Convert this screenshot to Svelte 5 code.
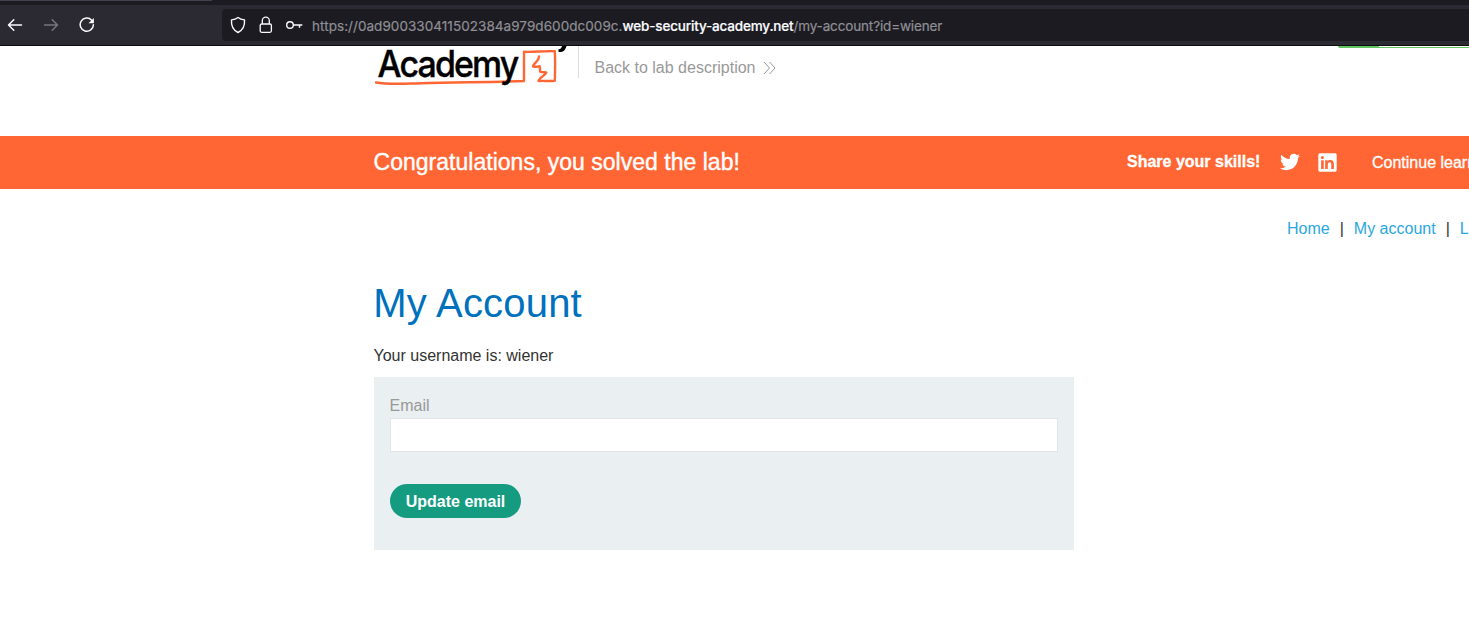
<script>
  let email = $state('');
  const links = ['Home', 'My account', 'Log out'];
</script>

<div class="window">
  <header class="chrome">
    <div class="tabs"><div class="tab-edge"></div></div>
    <div class="toolbar">
      <div class="nav">
        <svg width="16" height="16" viewBox="0 0 16 16" fill="none" stroke="#fbfbfe" stroke-width="1.5" stroke-linecap="round" stroke-linejoin="round"><path d="M14.5 8H1.5M6.8 2.7L1.500 8l5.300 5.300" /></svg>
        <svg width="16" height="16" viewBox="0 0 16 16" fill="none" stroke="#77767d" stroke-width="1.5" stroke-linecap="round" stroke-linejoin="round"><path d="M1.500 8h13M9.200 2.700L14.500 8l-5.300 5.300" /></svg>
        <svg width="16" height="16" viewBox="0 0 16 16" fill="none" stroke="#fbfbfe" stroke-width="1.5" stroke-linecap="round"><path d="M12.700 3.200A6.600 6.600 0 1 0 14.400 7.700" /><path d="M14.900 1v5.200H9.500z" fill="#fbfbfe" stroke="none" /></svg>
      </div>
      <div class="urlbar">
        <svg width="16" height="18" viewBox="0 0 16 18" fill="none" stroke="#fbfbfe" stroke-width="1.4" stroke-linejoin="round"><path d="M8 1.500C6 3 3.800 3.600 1.500 3.900c-.5 6 1.700 10.300 6.500 12.600 4.800-2.300 7-6.600 6.500-12.600C12.200 3.600 10 3 8 1.500z" /></svg>
        <svg width="14" height="18" viewBox="0 0 14 18" fill="none" stroke="#fbfbfe" stroke-width="1.300"><rect x="1.200" y="8" width="11.200" height="8.300" rx="1.500" /><path d="M3.300 8V4.700a3.500 3.500 0 0 1 7 0V8" /></svg>
        <svg width="18" height="18" viewBox="0 0 18 18" fill="none" stroke="#fbfbfe" stroke-width="1.400"><circle cx="5" cy="9" r="3.300" /><path d="M8.300 9h9M14.500 9v2.800" /></svg>
        <span class="url"><span class="sub">https://0ad900330411502384a979d600dc009c.</span><b>web-security-academy.net</b><span class="path">/my-account?id=wiener</span></span>
      </div>
    </div>
  </header>

  <main>
    <div class="lab-header">
      <svg class="logo" width="195" height="44" viewBox="0 0 195 44">
        <path d="M1 36.500C14 38.800 26 37.800 46 37.200c36-1.200 68-.7 103-2.200L149 5.800c10 .6 20-1 30.800-.6.6 10 .4 19 0 29.500-5.600.6-10.200 0-16.300.3.700-3 6.300-5.500 7.800-8.500l-6-.6-.7-5.800c-2.600 1.100-4.800.8-6.600.2 1.400-4.200 6.100-5.100 6-9.800" fill="none" stroke="#f63" stroke-width="2.400" stroke-linejoin="round" stroke-linecap="round" />
        <text x="2.500" y="31" textLength="140" lengthAdjust="spacingAndGlyphs">Academy</text>
        <path d="M187 0h4.600l-1.200 2.800c-1 2.400-2.500 3.500-6.900 3.100V3.200c2.400.1 2.900-1.600 3.500-3.200z" fill="#000" />
      </svg>
      <div class="divider"></div>
      <div class="back">Back to lab description
        <svg width="13" height="14" viewBox="0 0 13 14" fill="none" stroke="#999" stroke-width="1"><path d="M1 1l5.500 6L1 13M6.500 1l5.500 6-5.500 6" /></svg>
      </div>
      <div class="status"></div>
    </div>

    <section class="banner">
      <h4>Congratulations, you solved the lab!</h4>
      <strong>Share your skills!</strong>
      <svg class="twitter" width="20" height="20" viewBox="0 0 24 24" fill="#fff"><path d="M23.950 4.570a10 10 0 0 1-2.820.77 4.960 4.960 0 0 0 2.160-2.720c-.950.550-2 .960-3.130 1.180a4.920 4.920 0 0 0-8.380 4.480C7.690 8.090 4.070 6.130 1.640 3.160a4.820 4.820 0 0 0-.67 2.480c0 1.710.87 3.210 2.190 4.100a4.900 4.900 0 0 1-2.230-.620v.06a4.920 4.920 0 0 0 3.950 4.830 5 5 0 0 1-2.210.080 4.940 4.940 0 0 0 4.600 3.420A9.870 9.870 0 0 1 0 19.540a13.990 13.990 0 0 0 7.550 2.210c9.050 0 13.990-7.500 13.990-13.980 0-.210 0-.420-.020-.630a9.940 9.940 0 0 0 2.430-2.570z" /></svg>
      <svg class="linkedin" width="19" height="19" viewBox="0 0 19 19"><rect x=".3" y=".3" width="18.400" height="18.400" rx="1.600" fill="#fff" /><g fill="#f63"><circle cx="4.400" cy="4.500" r="1.500" /><path d="M3.100 7.200h2.600V16H3.100zM7.200 7.200h2.500v1.200c.5-.9 1.400-1.400 2.700-1.400 2.700 0 3.500 1.700 3.500 4.200V16h-2.600v-4.300c0-1.300-.3-2.400-1.600-2.400-1.400 0-1.900 1-1.900 2.400V16H7.200z" /></g></svg>
      <span class="continue">Continue learning</span>
    </section>

    <nav class="links">
      {#each links as link, i}
        {#if i}<span>|</span>{/if}<a href="#{link}">{link}</a>
      {/each}
    </nav>

    <section class="account">
      <h1>My Account</h1>
      <p>Your username is: wiener</p>
      <form onsubmit={(e) => e.preventDefault()}>
        <label for="email">Email</label>
        <input id="email" bind:value={email} />
        <button>Update email</button>
      </form>
    </section>
  </main>
</div>

<style>
  :global(body) { background: #fff; overflow: hidden; }
  .window { width: 1469px; height: 622px; overflow: hidden; font: 16px "Liberation Sans", Arial, sans-serif; color: #333332; }
  .chrome { height: 46px; box-sizing: border-box; background: #2b2a33; border-bottom: 1px solid #0c0c0d; }
  .tabs { height: 5px; background: #1c1b22; }
  .tab-edge { width: 212px; height: 1px; background: #42414d; }
  .toolbar { display: flex; height: 40px; }
  .nav { display: flex; gap: 20px; padding: 12px 0 0 7px; width: 215px; }
  .urlbar { flex: 1; display: flex; align-items: center; height: 32px; margin-top: 4px; padding-left: 8px; background: #1c1b22; border-radius: 4px 0 0 4px; }
  .urlbar svg { flex: none; }
  .urlbar svg:nth-child(2) { margin-left: 13px; }
  .urlbar svg:nth-child(3) { margin-left: 12px; }
  .url { display: flex; margin-left: 9px; padding-top: 1px; font: 13.5px Inter, sans-serif; color: #8f8f94; white-space: nowrap; }
  .sub { letter-spacing: .05px; -webkit-text-stroke: .2px #8f8f94; }
  .url b { font-weight: 500; color: #fbfbfe; letter-spacing: -.17px; -webkit-text-stroke: .2px #fbfbfe; }
  .path { letter-spacing: -.14px; -webkit-text-stroke: .2px #8f8f94; }
  .lab-header { display: flex; height: 90px; }
  .logo { margin-left: 375px; flex: none; }
  .logo text { font: 500 37px Inter, sans-serif; letter-spacing: -2px; fill: #000; stroke: #000; stroke-width: .4px; }
  .divider { width: 1px; height: 32px; margin-left: 8px; background: #dedede; }
  .back { display: flex; align-items: center; gap: 8px; height: 20px; margin: 12px 0 0 15.5px; color: #999; }
  .status { width: 131px; height: 2px; margin-left: auto; background: linear-gradient(#62c462, #62c462) 0 0 / 41px 2px no-repeat, linear-gradient(#62c462, #62c462) 0 1px / 131px 1px no-repeat; border-radius: 0 0 0 3px; }
  .banner { display: flex; align-items: center; height: 53px; padding-left: 373.5px; background: #f63; color: #fff; white-space: nowrap; }
  .banner > * { flex: none; }
  h4 { width: 753.5px; margin: 0; font-size: 23px; letter-spacing: .02px; font-weight: 400; -webkit-text-stroke: .4px #fff; }
  .banner strong { width: 153px; padding-bottom: 2px; -webkit-text-stroke: .3px #fff; }
  .twitter { position: relative; top: -1px; }
  .linkedin { margin-left: 18px; }
  .continue { margin-left: 35px; -webkit-text-stroke: .3px #fff; }
  .links { display: flex; gap: 10px; height: 20px; margin: 30px 0 0 1287px; line-height: 20px; white-space: nowrap; }
  .links a { color: #29a7df; text-decoration: none; }
  .account { width: 700px; margin: 40px 0 0 374px; }
  h1 { height: 48px; margin: 0 0 0 -.7px; font-size: 40px; line-height: 48px; letter-spacing: .18px; font-weight: 400; color: #0071bc; }
  p { height: 20px; margin: 19px 0 11px -.5px; line-height: 20px; }
  form { height: 173px; box-sizing: border-box; padding: 18px 16px; background: #eaeff2; display: flex; flex-direction: column; align-items: flex-start; }
  label { height: 23px; margin-left: -.5px; line-height: 21px; color: #999; }
  input { width: 668px; height: 34px; box-sizing: border-box; padding: 0 8px; border: 1px solid #e1e5e6; background: #fff; outline: none; }
  button { width: 131px; height: 34px; margin-top: 32px; padding: 2px 0 0; border: 0; border-radius: 17px; background: #159b80; color: #fff; font: bold 16px "Liberation Sans", sans-serif; }
</style>
